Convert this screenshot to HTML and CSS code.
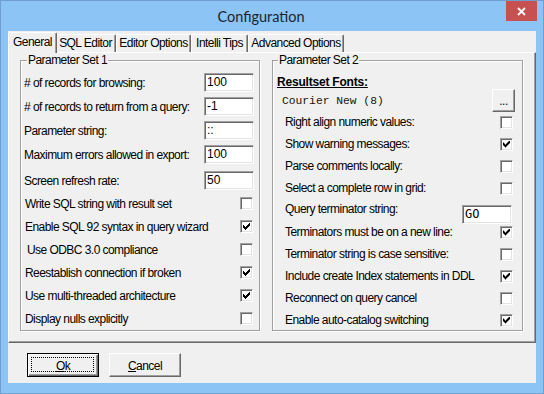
FILE: index.html
```html
<!DOCTYPE html>
<html>
<head>
<meta charset="utf-8">
<link rel="stylesheet" href="styles.css">
</head>
<body>
<div class="window">
  <div class="titlebar">
    <span></span>
    <div class="title">Configuration</div>
    <div class="close"><svg width="9" height="9" viewBox="0 0 9 9"><path d="M1 1L8 8M8 1L1 8" stroke="#fff" stroke-width="1.8"/></svg></div>
  </div>
  <div class="client">
    <div class="tabs">
      <div class="tab active t-general">General</div>
      <div class="tab t-sql">SQL Editor</div>
      <div class="tab t-editor">Editor Options</div>
      <div class="tab t-intelli">Intelli Tips</div>
      <div class="tab t-adv">Advanced Options</div>
    </div>
    <div class="page">
      <div class="group g1">
        <span class="legend">Parameter Set 1</span>
        <div class="row inp"><span class="lbl"># of records for browsing:</span><span class="edit">100</span></div>
        <div class="row inp"><span class="lbl"># of records to return from a query:</span><span class="edit">-1</span></div>
        <div class="row inp"><span class="lbl">Parameter string:</span><span class="edit">::</span></div>
        <div class="row inp"><span class="lbl">Maximum errors allowed in export:</span><span class="edit">100</span></div>
        <div class="row inp gap"><span class="lbl">Screen refresh rate:</span><span class="edit">50</span></div>
        <div class="row chk"><span>Write SQL string with result set</span><span class="cb"></span></div>
        <div class="row chk"><span>Enable SQL 92 syntax in query wizard</span><span class="cb on"></span></div>
        <div class="row chk"><span class="ind">Use ODBC 3.0 compliance</span><span class="cb"></span></div>
        <div class="row chk"><span>Reestablish connection if broken</span><span class="cb on"></span></div>
        <div class="row chk"><span>Use multi-threaded architecture</span><span class="cb on"></span></div>
        <div class="row chk"><span>Display nulls explicitly</span><span class="cb"></span></div>
      </div>
      <div class="group g2">
        <span class="legend">Parameter Set 2</span>
        <div class="heading">Resultset Fonts:</div>
        <div class="row fontrow"><span class="fontname">Courier New (8)</span><span class="btn small">...</span></div>
        <div class="row chk2"><span>Right align numeric values:</span><span class="cb"></span></div>
        <div class="row chk2"><span>Show warning messages:</span><span class="cb on"></span></div>
        <div class="row chk2"><span>Parse comments locally:</span><span class="cb"></span></div>
        <div class="row chk2"><span>Select a complete row in grid:</span><span class="cb"></span></div>
        <div class="row chk2 query"><span class="qlabel">Query terminator string:</span><span class="edit go">GO</span></div>
        <div class="row chk2"><span>Terminators must be on a new line:</span><span class="cb on"></span></div>
        <div class="row chk2"><span>Terminator string is case sensitive:</span><span class="cb"></span></div>
        <div class="row chk2"><span>Include create Index statements in DDL</span><span class="cb on"></span></div>
        <div class="row chk2"><span>Reconnect on query cancel</span><span class="cb"></span></div>
        <div class="row chk2"><span>Enable auto-catalog switching</span><span class="cb on"></span></div>
      </div>
    </div>
    <div class="buttons">
      <div class="btn default"><span><u>O</u>k</span></div>
      <div class="btn"><span><u>C</u>ancel</span></div>
    </div>
  </div>
</div>
</body>
</html>
```

FILE: styles.css
```css
* { box-sizing: border-box; }
html, body { margin: 0; padding: 0; }
body {
  width: 544px;
  height: 394px;
  overflow: hidden;
  font-family: "Liberation Sans", Arial, sans-serif;
  font-size: 12px;
  letter-spacing: -0.55px;
  color: #000;
}
.window {
  width: 544px;
  height: 394px;
  background: #8cc5f5;
  border: 1px solid #6f9fd0;
  display: flex;
  flex-direction: column;
  padding: 0 7px 10px 7px;
}
.titlebar {
  height: 30px;
  flex: none;
  display: grid;
  grid-template-columns: 1fr auto 1fr;
}
.title {
  font-family: Lato, "Open Sans", sans-serif;
  font-size: 14.5px;
  letter-spacing: 0;
  color: #1a2430;
  line-height: 31px;
  margin-right: 22px;
}
.close {
  justify-self: end;
  align-self: start;
  width: 31px;
  height: 20px;
  margin-right: -1px;
  background: #c75050;
  display: flex;
  align-items: center;
  justify-content: center;
}
.client {
  flex: 1;
  background: #f0f0f0;
  display: flex;
  flex-direction: column;
}
.tabs {
  height: 21px;
  flex: none;
  display: flex;
  align-items: flex-end;
  padding-left: 2px;
}
.tab {
  height: 18px;
  border-top: 1px solid #fff;
  border-left: 1px solid #fff;
  border-right: 1px solid #696969;
  box-shadow: inset -1px 0 #a0a0a0;
  border-radius: 2px 2px 0 0;
  background: #f0f0f0;
  display: flex;
  align-items: center;
  justify-content: center;
  white-space: nowrap;
  padding-bottom: 1px;
}
.tab.active {
  height: 21px;
  margin: 0 -2px -1px -2px;
  position: relative;
  z-index: 1;
  padding-bottom: 3px;
}
.t-general { width: 49px; }
.t-sql { width: 61px; }
.t-editor { width: 75px; }
.t-intelli { width: 57px; }
.t-adv { width: 96px; }

.page {
  height: 291px;
  flex: none;
  border: 1px solid;
  border-color: #fff #696969 #696969 #fff;
  box-shadow: inset -1px -1px #a0a0a0;
  display: flex;
  gap: 12px;
  padding: 7px 11px 0 11px;
}
.group {
  position: relative;
  height: 271px;
  border: 1px solid #a0a0a0;
  box-shadow: inset 1px 1px #fff, 1px 1px #fff;
}
.g1 { width: 240px; padding: 9px 5px 0 3px; }
.g2 { width: 251px; padding: 14px 7px 0 4px; }
.legend {
  position: absolute;
  top: -8px;
  left: 6px;
  padding: 0 1px;
  line-height: 15px;
  background: #f0f0f0;
}
.g2 .legend { left: 5px; }

.row {
  display: flex;
  align-items: center;
  justify-content: space-between;
  white-space: nowrap;
}
.row.inp { height: 24px; }
.row.inp .lbl { padding-top: 2px; }
.row.inp.gap { margin-top: 2px; }
.row.chk { height: 23px; padding-left: 1px; margin-right: 1px; }
.row .ind { padding-left: 2px; }

.edit {
  width: 50px;
  height: 19px;
  background: #fff;
  border: 1px solid;
  border-color: #a0a0a0 #fff #fff #a0a0a0;
  box-shadow: inset 1px 1px #696969, inset -1px -1px #e3e3e3;
  padding: 0 2px;
  line-height: 17px;
  letter-spacing: 0;
}
.cb {
  width: 13px;
  height: 13px;
  flex: none;
  background: #fff;
  border: 1px solid;
  border-color: #a0a0a0 #fff #fff #a0a0a0;
  box-shadow: inset 1px 1px #696969, inset -1px -1px #e3e3e3;
  display: flex;
  align-items: center;
  justify-content: center;
}
.cb.on::after {
  content: "";
  width: 7px;
  height: 7px;
  background: #000;
  clip-path: polygon(6px 0, 7px 0, 7px 3px, 6px 3px, 6px 4px, 5px 4px, 5px 5px, 4px 5px, 4px 6px, 3px 6px, 3px 7px, 2px 7px, 2px 6px, 1px 6px, 1px 5px, 0 5px, 0 2px, 1px 2px, 1px 3px, 2px 3px, 2px 4px, 3px 4px, 3px 3px, 4px 3px, 4px 2px, 5px 2px, 5px 1px, 6px 1px);
}

.heading {
  height: 15px;
  line-height: 15px;
  font-weight: bold;
  letter-spacing: -0.2px;
  text-decoration: underline;
}
.fontrow { height: 22px; margin-top: -1px; align-items: center; }
.fontname {
  font-family: "Liberation Mono", "Courier New", monospace;
  font-size: 11.3px;
  letter-spacing: 0;
  color: #1a1608;
  margin-left: 5px;
  padding-top: 2px;
}
.row.chk2 { height: 22px; padding-left: 8px; }
.row.chk2 .cb { margin-right: 2px; }
.row.query { align-items: flex-start; }
.qlabel { padding-top: 3px; }
.edit.go {
  width: 50px;
  margin-top: 6px;
  margin-right: 3px;
  font-family: "DejaVu Sans Mono", monospace;
  font-size: 12px;
}

.buttons {
  flex: 1;
  display: flex;
  gap: 10px;
  padding: 10px 0 0 19px;
}
.btn {
  position: relative;
  width: 72px;
  height: 24px;
  background: #f0f0f0;
  border: 1px solid;
  border-color: #fff #696969 #696969 #fff;
  box-shadow: inset -1px -1px #a0a0a0;
  display: flex;
  align-items: center;
  justify-content: center;
  padding-top: 1px;
}
.btn u { text-underline-offset: 1px; }
.btn.default {
  border-color: #000;
  box-shadow: inset 1px 1px #fff, inset -1px -1px #696969, inset -2px -2px #a0a0a0;
}
.btn.default::after {
  content: "";
  position: absolute;
  left: 3px;
  top: 3px;
  right: 4px;
  bottom: 4px;
  border: 1px dotted #000;
}
.btn.small {
  width: 23px;
  height: 23px;
  align-items: flex-end;
  padding-bottom: 3px;
}
```
